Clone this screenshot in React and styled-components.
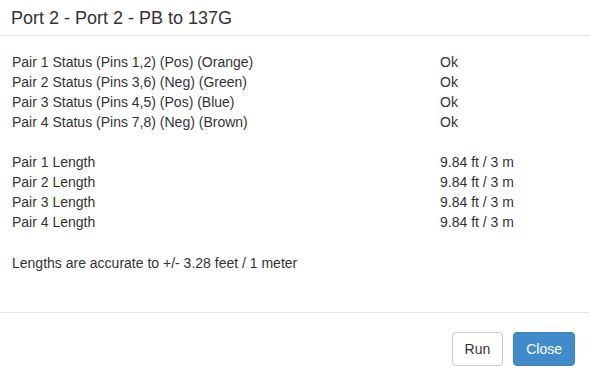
import React from "react";
import styled, { createGlobalStyle } from "styled-components";

const Global = createGlobalStyle`
  html, body { margin: 0; padding: 0; background: #fff; }
  body { font-family: "Liberation Sans", Arial, Helvetica, sans-serif; color: #333; }
`;

const Modal = styled.div`
  width: 590px;
  height: 376px;
  display: flex;
  flex-direction: column;
  background: #fff;
`;

const Header = styled.div`
  height: 36px;
  box-sizing: border-box;
  padding: 0 11px;
  display: flex;
  align-items: center;
  border-bottom: 1px solid #e5e5e5;
  flex-shrink: 0;
`;

const Title = styled.h4`
  margin: 0;
  font-size: 18px;
  font-weight: 400;
  color: #333;
  line-height: 20px;
  padding-top: 1px;
`;

const Body = styled.div`
  flex: 1;
  padding: 16px 12px 0;
  font-size: 14px;
  line-height: 20px;
`;

const Table = styled.div`
  display: grid;
  grid-template-columns: 428px 1fr;
  margin-bottom: ${(p) => p.$gap}px;
`;

const Cell = styled.div`
  white-space: nowrap;
`;

const Note = styled.p`
  margin: 0;
`;

const Footer = styled.div`
  border-top: 1px solid #e5e5e5;
  padding: 19px 15px 10px;
  display: flex;
  justify-content: flex-end;
  gap: 10px;
  flex-shrink: 0;
`;

const Button = styled.button`
  height: 34px;
  box-sizing: border-box;
  padding: 0 12px;
  font-family: "Liberation Sans", Arial, Helvetica, sans-serif;
  font-size: 14px;
  border-radius: 4px;
  border: 1px solid ${(p) => (p.$primary ? "#3b80c0" : "#ccc")};
  background: ${(p) => (p.$primary ? "#428bca" : "#fff")};
  color: ${(p) => (p.$primary ? "#fff" : "#333")};
  cursor: pointer;
`;

const status = [
  ["Pair 1 Status (Pins 1,2) (Pos) (Orange)", "Ok"],
  ["Pair 2 Status (Pins 3,6) (Neg) (Green)", "Ok"],
  ["Pair 3 Status (Pins 4,5) (Pos) (Blue)", "Ok"],
  ["Pair 4 Status (Pins 7,8) (Neg) (Brown)", "Ok"],
];

const lengths = [
  ["Pair 1 Length", "9.84 ft / 3 m"],
  ["Pair 2 Length", "9.84 ft / 3 m"],
  ["Pair 3 Length", "9.84 ft / 3 m"],
  ["Pair 4 Length", "9.84 ft / 3 m"],
];

function Rows({ rows, gap }) {
  return (
    <Table $gap={gap}>
      {rows.map(([a, b]) => (
        <React.Fragment key={a}>
          <Cell>{a}</Cell>
          <Cell>{b}</Cell>
        </React.Fragment>
      ))}
    </Table>
  );
}

export default function App() {
  return (
    <Modal>
      <Global />
      <Header>
        <Title>Port 2 - Port 2 - PB to 137G</Title>
      </Header>
      <Body>
        <Rows rows={status} gap={20} />
        <Rows rows={lengths} gap={21} />
        <Note>Lengths are accurate to +/- 3.28 feet / 1 meter</Note>
      </Body>
      <Footer>
        <Button>Run</Button>
        <Button $primary>Close</Button>
      </Footer>
    </Modal>
  );
}
